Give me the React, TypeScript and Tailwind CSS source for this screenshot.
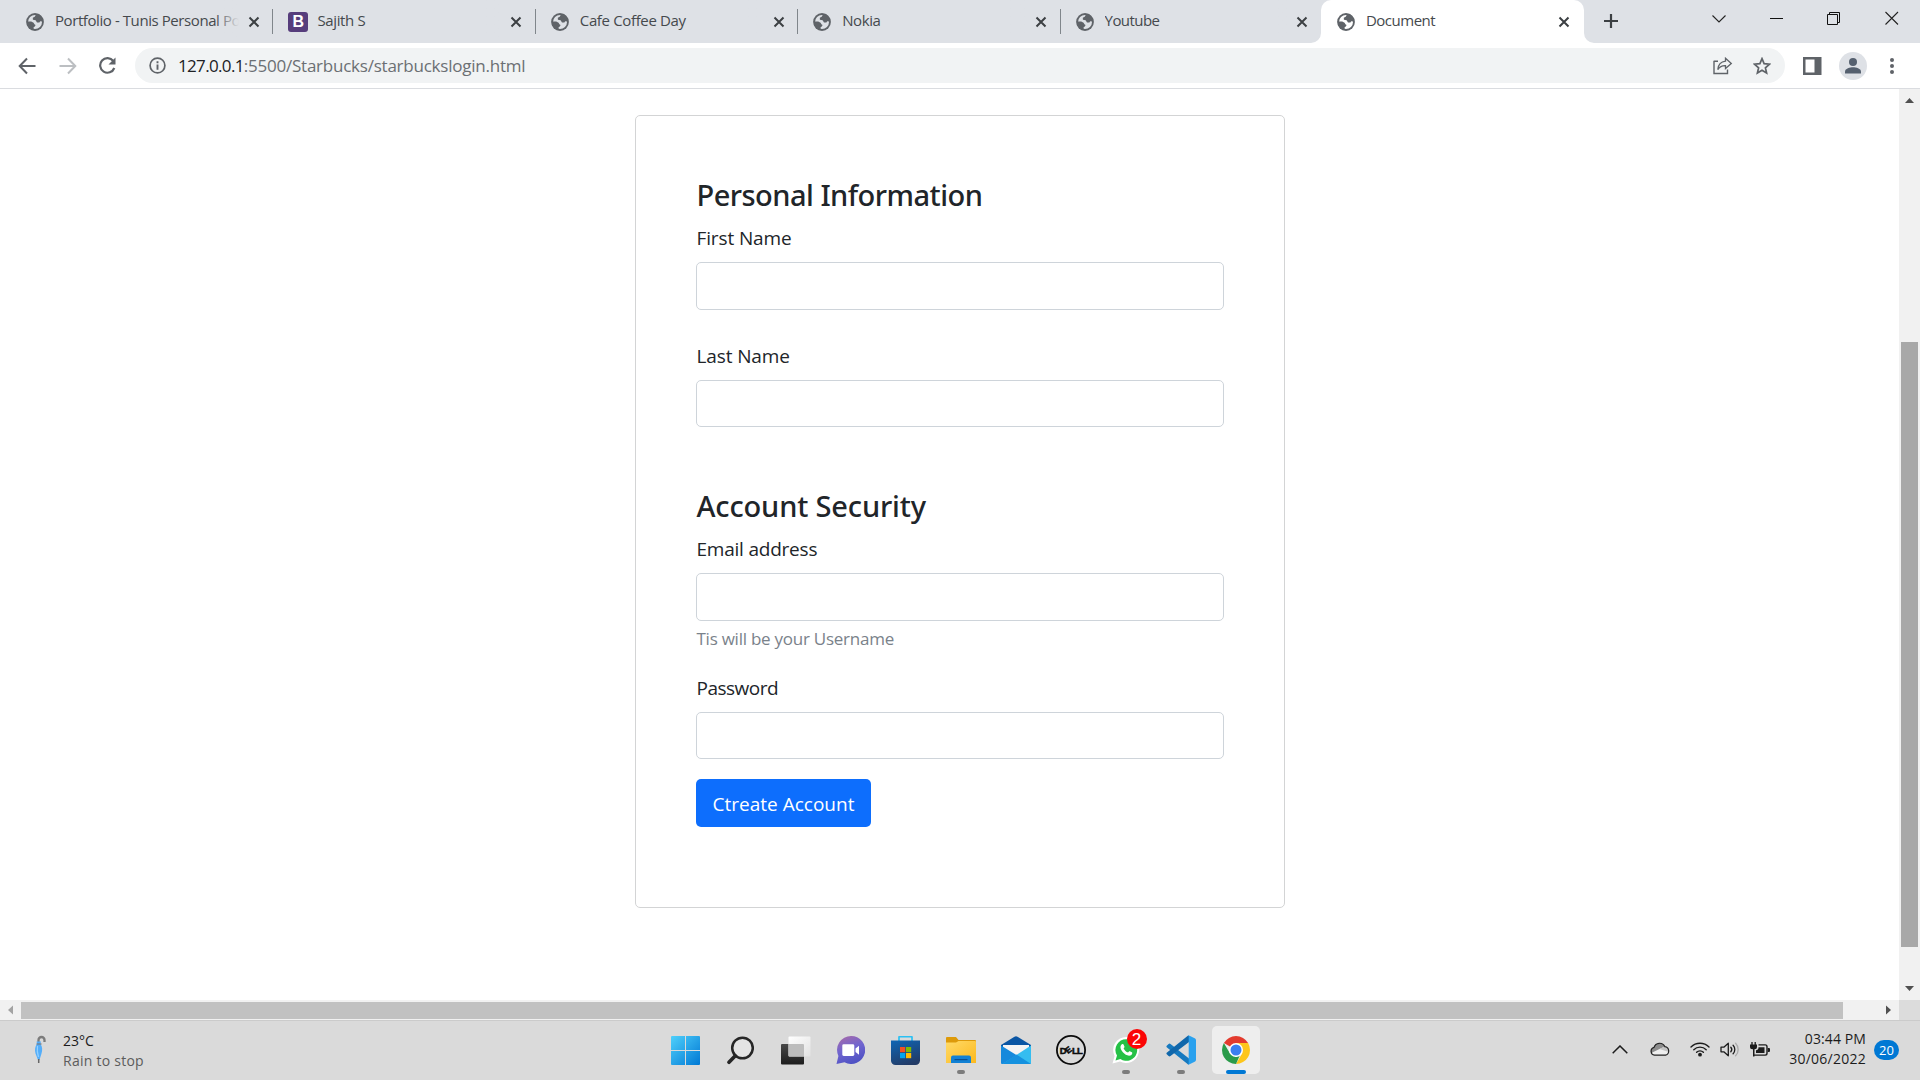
import React from "react";

const sans = "font-['Open_Sans','Noto_Sans',sans-serif]";

function Globe({ light = "#dee1e6" }: { light?: string }) {
  return (
    <svg width="18" height="18" viewBox="0 0 18 18" className="block shrink-0">
      <circle cx="9" cy="9" r="8.9" fill="#5f6368" />
      <circle cx="9" cy="9" r="7" fill={light} />
      <path d="M10.3 1 8.7 3.8 6.8 4.8 6.9 6.8 9.6 7.3 11 9.4 13.4 9.6 14.2 8.2 16.6 8.6 17 5.5 13.5 1.5Z" fill="#5f6368" />
      <path d="M1 8.5 5.2 8.5 7.6 9.8 8.4 11.2 9.6 12 8.8 13.6 7.6 14.3 7.7 17 4 16 1 12Z" fill="#5f6368" />
    </svg>
  );
}

function CloseX() {
  return (
    <svg width="12" height="12" viewBox="0 0 12 12" className="block shrink-0">
      <path d="M1.5 1.5l9 9M10.5 1.5l-9 9" stroke="#3c4043" strokeWidth="2" fill="none" />
    </svg>
  );
}

function Tab({ title, track = "tracking-[-0.35px]", bootstrap = false, last = false }: { title: string; track?: string; bootstrap?: boolean; last?: boolean }) {
  return (
    <div className={`flex h-[43px] w-[262.4px] shrink-0 items-center ${bootstrap ? "pl-[15px]" : "pl-[15px]"}`}>
      {bootstrap ? (
        <span className="flex h-[20px] w-[20px] shrink-0 items-center justify-center rounded-[3px] bg-[#563d7c] font-['Liberation_Sans',sans-serif] text-[16px] font-bold leading-none text-white">B</span>
      ) : (
        <Globe />
      )}
      <span className={`relative ${bootstrap ? "ml-[9px]" : "ml-[11px]"} h-[40px] w-[184px] shrink-0 -translate-y-[2px] overflow-hidden whitespace-nowrap text-[15px] leading-[40px] text-[#45494d] ${track}`}>
        {title}
        <span className="absolute inset-y-0 right-0 w-[24px] bg-gradient-to-r from-transparent to-[#dee1e6]" />
      </span>
      <span className={last ? "ml-[7px]" : "ml-[9px]"}><CloseX /></span>
      {!last && <span className="ml-auto h-[25px] w-px bg-[#80868b]" />}
    </div>
  );
}

function Field({ label, track, below }: { label: string; track: string; below?: React.ReactNode }) {
  return (
    <div>
      <label className={`block h-[40px] pl-[0.5px] pt-px text-[19px] leading-[30px] text-[#212529] ${track}`}>{label}</label>
      <div className="h-[47.5px] rounded-[5px] border border-[#ced4da] bg-white" />
      {below}
    </div>
  );
}

function TabStrip() {
  return (
    <div className="flex h-[43px] bg-[#dee1e6] pl-[11px]">
      <Tab title="Portfolio - Tunis Personal Po" track="tracking-[-0.42px]" />
      <Tab title="Sajith S" bootstrap />
      <Tab title="Cafe Coffee Day" />
      <Tab title="Nokia" track="tracking-[-0.4px]" />
      <Tab title="Youtube" track="tracking-[-0.55px]" last />
      <div className="relative -ml-[2px] flex h-[43px] w-[263px] shrink-0 items-center rounded-t-[10px] bg-white pl-[16px]">
        <svg width="10" height="10" className="absolute -left-[10px] bottom-0"><path d="M10 0V10H0A10 10 0 0 0 10 0Z" fill="#fff" /></svg>
        <svg width="10" height="10" className="absolute -right-[10px] bottom-0"><path d="M0 0V10H10A10 10 0 0 1 0 0Z" fill="#fff" /></svg>
        <Globe light="#fff" />
        <span className="ml-[11px] h-[40px] w-[184px] shrink-0 -translate-y-[2px] text-[15px] leading-[40px] tracking-[-0.5px] text-[#45494d]">Document</span>
        <span className="ml-[8px]"><CloseX /></span>
      </div>
      <svg width="16" height="16" viewBox="0 0 16 16" className="ml-[19px] mt-[13px]"><path d="M8 1v14M1 8h14" stroke="#3c4043" strokeWidth="2.2" /></svg>
      <div className="ml-auto flex pr-[21px] pt-[11px]">
        <svg width="14" height="14" viewBox="0 0 14 14"><path d="M.5 4.500l6.500 6.500 6.500-6.500" stroke="#222" strokeWidth="1.1" fill="none" /></svg>
        <svg width="14" height="14" viewBox="0 0 14 14" className="ml-[44px]"><path d="M0 7.500h13" stroke="#111" strokeWidth="1" /></svg>
        <svg width="14" height="14" viewBox="0 0 14 14" className="ml-[43px]"><path d="M.5 3.500h10v10H.5zM2.500 3.500v-2h10v10h-2" stroke="#111" strokeWidth="1" fill="none" /></svg>
        <svg width="14" height="14" viewBox="0 0 14 14" className="ml-[44px]"><path d="M.5 1l12.500 12.500M13 1L.5 13.500" stroke="#222" strokeWidth="1.1" /></svg>
      </div>
    </div>
  );
}

function Toolbar() {
  return (
    <div className="flex h-[46px] items-center border-b border-[#dadce0] bg-white">
      <svg width="18" height="18" viewBox="0 0 18 18" className="ml-[18px]"><path d="M17.500 9H2M9 1.500L1.700 9 9 16.500" stroke="#5f6368" strokeWidth="2" fill="none" /></svg>
      <svg width="18" height="18" viewBox="0 0 18 18" className="ml-[23px]"><path d="M.5 9H16M9 1.500L16.300 9 9 16.500" stroke="#bcbfc2" strokeWidth="2" fill="none" /></svg>
      <svg width="19" height="18" viewBox="0 0 19 18" className="ml-[21px]"><path d="M15.300 4A7.300 7.300 0 1 0 16.300 11" stroke="#5f6368" strokeWidth="2.200" fill="none" /><path d="M17.500 .4V7.400H10.500Z" fill="#5f6368" /></svg>
      <div className="ml-[18px] flex h-[35px] w-[1650px] items-center rounded-full bg-[#f1f3f4] pl-[14px]">
        <svg width="17" height="17" viewBox="0 0 17 17"><circle cx="8.500" cy="8.500" r="7.400" stroke="#5f6368" strokeWidth="1.700" fill="none" /><path d="M8.500 4.200v2M8.500 7.500v5.200" stroke="#5f6368" strokeWidth="1.900" /></svg>
        <span className="ml-[12px] whitespace-nowrap text-[17px] leading-[35px] tracking-[-0.23px] text-[#6b6f73]"><span className="tracking-[-0.66px] text-[#202124]">127.0.0.1</span>:5500/Starbucks/starbuckslogin.html</span>
        <svg width="20" height="18" viewBox="0 0 20 18" className="ml-auto"><path d="M1 4.200H5M1 3.700V16.500H14.500V12.500" stroke="#5f6368" strokeWidth="1.400" fill="none" /><path d="M12.500 1.200L18.300 6.400 12.500 11.500V8.600C9 8.400 6.700 9.700 4.800 12.600 5.200 8 8 4.700 12.500 4.200Z" stroke="#5f6368" strokeWidth="1.300" fill="none" /></svg>
        <svg width="18" height="18" viewBox="0 0 18 18" className="ml-[20px] mr-[14px]"><path d="M9 1.700l2.100 5 5.400.5-4.100 3.600 1.200 5.300L9 13.300l-4.600 2.800 1.200-5.300L1.500 7.200l5.400-.5z" stroke="#5f6368" strokeWidth="1.700" fill="none" /></svg>
      </div>
      <svg width="19" height="18" viewBox="0 0 19 18" className="ml-[18px]"><path d="M0 0h18.500v18H0zM2.500 2.500v13H11.500v-13z" fillRule="evenodd" fill="#5f6368" /></svg>
      <svg width="28" height="28" viewBox="0 0 28 28" className="ml-[17px]"><circle cx="14" cy="14" r="14" fill="#dee1e6" /><circle cx="14" cy="10" r="4" fill="#55606f" /><path d="M6 21.500v-2c0-2.800 5-4.200 8-4.200s8 1.400 8 4.200v2z" fill="#55606f" /></svg>
      <svg width="6" height="18" viewBox="0 0 6 18" className="ml-[22px]"><g fill="#5f6368"><circle cx="3" cy="3" r="2" /><circle cx="3" cy="9" r="2" /><circle cx="3" cy="15" r="2" /></g></svg>
    </div>
  );
}

function Page() {
  return (
    <div className="flex h-[931px]">
      <div className="flex w-[1899px] flex-col">
        <div className="h-[911px] bg-white pt-[26px]">
          <div className="ml-[635px] h-[793px] w-[650px] rounded-[5px] border border-[#d3d4d5] px-[60px] pt-[60px]">
            <h4 className="h-[46px] whitespace-nowrap pl-[0.5px] pt-px font-['Noto_Sans',sans-serif] text-[29px] font-medium leading-[36px] tracking-[-0.52px] text-[#212529]">Personal Information</h4>
            <Field label="First Name" track="tracking-[-0.12px]" />
            <div className="mt-[30px]"><Field label="Last Name" track="tracking-[-0.12px]" /></div>
            <h4 className="mt-[60px] h-[46px] whitespace-nowrap pl-[0.5px] pt-px font-['Noto_Sans',sans-serif] text-[29px] font-medium leading-[36px] tracking-[-0.15px] text-[#212529]">Account Security</h4>
            <Field
              label="Email address"
              track="tracking-[-0.22px]"
              below={<p className="mt-[5px] h-[26px] pl-[0.5px] text-[17px] leading-[26px] tracking-[-0.25px] text-[#7a828a]">Tis will be your Username</p>}
            />
            <div className="mt-[20px]"><Field label="Password" track="tracking-[-0.5px]" /></div>
            <button className="mt-[20px] block h-[48px] w-[175px] rounded-[5px] bg-[#0d6efd] pt-[2px] text-center text-[19px] leading-[46px] text-white">Ctreate Account</button>
          </div>
        </div>
        <div className="flex h-[20px] items-center bg-[#f1f1f1]">
          <svg width="21" height="20"><path d="M13 5.500v9L8 10z" fill="#a3a3a3" /></svg>
          <div className="h-[17px] w-[1822px] bg-[#c1c1c1]" />
          <svg width="21" height="20" className="ml-[35px]"><path d="M8 5.500v9L13 10z" fill="#505050" /></svg>
        </div>
      </div>
      <div className="flex w-[21px] flex-col">
        <div className="flex h-[911px] flex-col items-center bg-[#f1f1f1]">
          <svg width="21" height="21"><path d="M6 14h9l-4.500-5z" fill="#505050" /></svg>
          <div className="mt-[232px] h-[605px] w-[17px] bg-[#a8a8a8]" />
          <svg width="21" height="21" className="mt-auto"><path d="M6 7h9l-4.500 5z" fill="#505050" /></svg>
        </div>
        <div className="h-[20px] bg-[#dcdcdc]" />
      </div>
    </div>
  );
}

function AppSlot({ children, running = false }: { children: React.ReactNode; running?: boolean }) {
  return (
    <div className="relative flex h-[58px] w-[55px] items-center justify-center">
      {children}
      {running && <span className="absolute bottom-[5px] left-1/2 h-[4px] w-[8px] -translate-x-1/2 rounded-full bg-[#7c7c7c]" />}
    </div>
  );
}

function Taskbar() {
  return (
    <div className="flex h-[60px] border-t border-[#cbcbcb] bg-[#dadada]">
      <div className="flex w-[658px]">
        <svg width="12" height="30" viewBox="0 0 12 30" className="ml-[34px] mt-[14px]">
          <path d="M4.500 8V5a3 3 0 0 1 6 0v2" stroke="#7c7c7c" strokeWidth="2.300" fill="none" />
          <path d="M2.500 6.500h4.500l-.5 2.200C8.500 12 8.600 15 7.500 18.500L5.500 25h-1.500L1.500 18.500C.5 14.500 1 11.500 3 8.700Z" fill="#54aefa" />
          <path d="M3.500 11c-.6 4 0 8 1 11" stroke="#93d0ff" strokeWidth="1.200" fill="none" />
          <path d="M4.700 24v4" stroke="#666" strokeWidth="1.500" />
          <path d="M2.500 9h5" stroke="#707b86" strokeWidth="1.200" />
        </svg>
        <div className="ml-[17px] pt-[10px] text-[14px] leading-[20px]">
          <div className="text-[#1c1c1c]">23°C</div>
          <div className="tracking-[0.25px] text-[#5c5c5c]">Rain to stop</div>
        </div>
      </div>
      <div className="flex">
        <AppSlot>
          <svg width="29" height="29" viewBox="0 0 29 29">
            <defs><linearGradient id="win" x1="0" y1="0" x2="1" y2="1" gradientUnits="objectBoundingBox"><stop offset="0" stopColor="#4fd0fb" /><stop offset="1" stopColor="#0078d4" /></linearGradient></defs>
            <path d="M1 0H14V14H0V1A1 1 0 0 1 1 0ZM15 0H28A1 1 0 0 1 29 1V14H15ZM0 15H14V29H1A1 1 0 0 1 0 28ZM15 15H29V28A1 1 0 0 1 28 29H15Z" fill="url(#win)" />
          </svg>
        </AppSlot>
        <AppSlot>
          <svg width="27" height="29" viewBox="0 0 27 29"><circle cx="15.500" cy="12" r="10.300" fill="#e4e4e4" stroke="#262626" strokeWidth="2.500" /><path d="M8.300 19.700L2 26.300" stroke="#262626" strokeWidth="3.600" strokeLinecap="round" /></svg>
        </AppSlot>
        <AppSlot>
          <svg width="30" height="29" viewBox="0 0 30 29">
            <defs>
              <linearGradient id="tv1" x1="0" y1="0" x2="0" y2="1"><stop offset="0" stopColor="#484848" /><stop offset="1" stopColor="#1d1d1d" /></linearGradient>
              <linearGradient id="tv2" x1="0" y1="0" x2="1" y2="1"><stop offset="0" stopColor="#ffffff" /><stop offset="1" stopColor="#e2e2e2" /></linearGradient>
            </defs>
            <rect x="0" y="8" width="23" height="20.500" rx="1" fill="url(#tv1)" />
            <rect x="7.500" y="0.500" width="22" height="20" rx="1" fill="url(#tv2)" />
            <path d="M7.500 8H22a1 1 0 0 1 1 1V20.500H8.500a1 1 0 0 1-1-1z" fill="#bdbdbd" />
          </svg>
        </AppSlot>
        <AppSlot>
          <svg width="29" height="28" viewBox="0 0 29 28">
            <defs><linearGradient id="chat" x1="0.100" y1="0" x2="0.500" y2="1"><stop offset="0" stopColor="#a86aa8" /><stop offset="0.500" stopColor="#7165cf" /><stop offset="1" stopColor="#4f52c4" /></linearGradient></defs>
            <path d="M15 0A14 14 0 1 1 8.500 26.300L.5 28 2.400 20A14 14 0 0 1 15 0Z" fill="url(#chat)" />
            <rect x="6.300" y="8.300" width="12" height="11.600" rx="1.400" fill="#fff" />
            <path d="M19.500 12.500L23 9.700v9L19.500 16z" fill="#fff" />
          </svg>
        </AppSlot>
        <AppSlot>
          <svg width="29" height="29" viewBox="0 0 29 29">
            <defs><linearGradient id="store" x1="0.200" y1="0" x2="0.600" y2="1"><stop offset="0" stopColor="#0f63b0" /><stop offset="1" stopColor="#233b66" /></linearGradient></defs>
            <path d="M8 6V1.200a.6.6 0 0 1 .6-.6H20.400a.6.6 0 0 1 .6.6V6" stroke="#2bc0f3" strokeWidth="1.700" fill="none" />
            <path d="M0 4.500H29V24.500A4.500 4.500 0 0 1 24.500 29H4.500A4.500 4.500 0 0 1 0 24.500Z" fill="url(#store)" />
            <path d="M9 11h5.200v5.200H9z" fill="#f25022" /><path d="M15 11h5.200v5.200H15z" fill="#7fba00" /><path d="M9 17h5.200v5.200H9z" fill="#00a4ef" /><path d="M15 17h5.200v5.200H15z" fill="#ffb900" />
          </svg>
        </AppSlot>
        <AppSlot running>
          <svg width="30" height="26" viewBox="0 0 30 26">
            <defs><linearGradient id="fold" x1="0" y1="0" x2="1" y2="1"><stop offset="0" stopColor="#ffda68" /><stop offset="1" stopColor="#fcb91d" /></linearGradient></defs>
            <path d="M0 1A1 1 0 0 1 1 0H10L12.500 3H29a1 1 0 0 1 1 1V10H0Z" fill="#dd9a0a" />
            <path d="M0 5.500H10L12.500 4H29a1 1 0 0 1 1 1V26H0Z" fill="url(#fold)" />
            <path d="M5 26V20.500A2 2 0 0 1 7 18.500H23A2 2 0 0 1 25 20.500V26Z" fill="#1281d4" />
            <path d="M8.500 22.600h13" stroke="#0a4f91" strokeWidth="1.200" />
          </svg>
        </AppSlot>
        <AppSlot>
          <svg width="30" height="28" viewBox="0 0 30 28">
            <path d="M0 9L13.500.7a3 3 0 0 1 3 0L30 9V14H0Z" fill="#0a56a4" />
            <path d="M2 9H28V20H2z" fill="#f4f4f4" />
            <path d="M0 9.500L30 28H1A1 1 0 0 1 0 27Z" fill="#1689dc" />
            <path d="M30 9.500V27a1 1 0 0 1-1 1H1.500Z" fill="#35bdf0" />
            <path d="M15.500 18.600L30 28H1.500Z" fill="#1591df" />
          </svg>
        </AppSlot>
        <AppSlot>
          <svg width="30" height="30" viewBox="0 0 30 30">
            <circle cx="15" cy="15" r="14.100" stroke="#0c0c0c" strokeWidth="1.800" fill="none" />
            <g fill="#0c0c0c" stroke="#0c0c0c" strokeWidth="0.500" fontFamily="Liberation Sans" fontWeight="bold" fontSize="9.500">
              <text x="3.700" y="18.500">D</text>
              <text x="15.900" y="18.500">L</text>
              <text x="20.900" y="18.500">L</text>
              <text x="0" y="0" fontSize="8.500" transform="translate(11.900 19) rotate(-38)">E</text>
            </g>
          </svg>
        </AppSlot>
        <AppSlot running>
          <span className="relative flex h-[28px] w-[28px] items-center justify-center">
            <svg width="28" height="28" viewBox="0 0 28 28" className="absolute inset-0">
              <path d="M14.500 1A13 13 0 1 1 8 25.500L.5 27.500 2.600 20A13 13 0 0 1 14.500 1Z" fill="#fff" />
              <path d="M14.500 3.200A10.800 10.800 0 1 1 8.400 23L3.500 24.500 5 19.500A10.800 10.800 0 0 1 14.500 3.200Z" fill="#25c146" />
              <path d="M9.800 8.300c.9-.6 1.600-.3 1.900.5l.8 1.900c.2.600-.5 1.100-.9 1.700 1 2 2.400 3.300 4.500 4.100.6-.6 1-1.500 1.700-1.200l2.100 1c.9.600.1 2.300-.8 2.900-4.600 2.400-11.400-4.700-10.600-8.600.2-.9.600-1.800 1.300-2.300z" fill="#fff" />
            </svg>
            <span className="absolute -right-[7px] -top-[7px] flex h-[20px] w-[20px] items-center justify-center rounded-full bg-[#fb0505] font-['Liberation_Sans',sans-serif] text-[17px] leading-none text-white">2</span>
          </span>
        </AppSlot>
        <AppSlot running>
          <svg width="30" height="30" viewBox="0 0 30 30">
            <path d="M1 10.500L2.600 9a1.500 1.500 0 0 1 1.900 0L23 23.500V29.500a2 2 0 0 1-1.500-.6L1 12.500a1.300 1.300 0 0 1 0-2z" fill="#1679bf" />
            <path d="M1 19.500L2.600 21a1.500 1.500 0 0 0 1.900 0L23 7V.5a2 2 0 0 0-1.500.6L1 17.500a1.300 1.300 0 0 0 0 2z" fill="#1067ab" />
            <path d="M21.500.9c.6-.6 1.200-.5 2-.2L28.700 3.200A2.200 2.200 0 0 1 30 5.200V24.800a2.200 2.200 0 0 1-1.300 2L23.500 29.300c-.8.400-1.500.3-2-.2.900.6 1.200-.2 1.200-1.100V2C22.700 1.100 22.200.5 21.500.9z" fill="#2aa1ee" />
          </svg>
        </AppSlot>
        <AppSlot>
          <span className="relative flex h-[48px] w-[48px] shrink-0 items-center justify-center rounded-[5px] bg-[#eeeeee]">
            <svg width="28" height="28" viewBox="0 0 28 28">
              <path d="M14 14L1.880 7A14 14 0 0 1 26.120 7Z" fill="#e33b2e" />
              <path d="M14 7H26.120A14 14 0 0 1 14 28L20 17.500Z" fill="#fdc61c" />
              <path d="M1.880 7L8 17.500 14 21 18 19 14 28A14 14 0 0 1 1.880 7Z" fill="#2a9b4a" />
              <circle cx="14" cy="14" r="7" fill="#fff" /><circle cx="14" cy="14" r="5.500" fill="#3a7ff0" />
            </svg>
            <span className="absolute bottom-0 left-[14px] h-[4px] w-[20px] rounded-full bg-[#0078d4]" />
          </span>
        </AppSlot>
      </div>
      <div className="ml-auto flex items-center pb-[3px] pr-[21px]">
        <svg width="16" height="9" viewBox="0 0 16 9"><path d="M.7 8.300L8 1l7.300 7.300" stroke="#1c1c1c" strokeWidth="1.500" fill="none" /></svg>
        <svg width="20" height="14" viewBox="0 0 20 14" className="ml-[22px]">
          <path d="M4.500 13.200A4 4 0 0 1 4 5.400 5.800 5.800 0 0 1 14.800 4.600a4.400 4.400 0 0 1 .7 8.600z" fill="#efefef" />
          <path d="M1.200 11A4 4 0 0 1 4 5.400 5.800 5.800 0 0 1 14.800 4.600l-1.500.6L9.500 7Z" fill="#8c8c8c" /><path d="M9.500 7l5-2.400a4.400 4.400 0 0 1 4.300 5.500z" fill="#c4c4c4" />
          <path d="M4.500 13.200A4 4 0 0 1 4 5.400 5.800 5.800 0 0 1 14.800 4.600a4.400 4.400 0 0 1 .7 8.600z" stroke="#222" strokeWidth="1.200" fill="none" />
        </svg>
        <svg width="20" height="16" viewBox="0 0 20 16" className="ml-[20px]"><g stroke="#1c1c1c" strokeWidth="1.400" fill="none" strokeLinecap="round"><path d="M1 6a12.800 12.800 0 0 1 18 0M3.800 8.700a8.800 8.800 0 0 1 12.400 0M6.600 11.300a4.900 4.900 0 0 1 6.800 0" /></g><circle cx="10" cy="13.700" r="1.900" fill="#1c1c1c" /></svg>
        <svg width="20" height="15" viewBox="0 0 20 15" className="ml-[10px]"><g stroke="#1c1c1c" strokeWidth="1.300" fill="none" strokeLinecap="round"><path d="M1 5.200h2.800L8.300 1.200v12.600L3.800 9.800H1z" strokeLinejoin="round" /><path d="M10.800 5.200a3.500 3.500 0 0 1 0 4.600M13.100 3.200a6.300 6.300 0 0 1 0 8.600" /><path d="M15.600 1.200a9 9 0 0 1 0 12.600" stroke="#ababab" /></g></svg>
        <svg width="20" height="15" viewBox="0 0 20 15" className="ml-[10px]"><path d="M2 0v3M5.200 0v3" stroke="#1c1c1c" strokeWidth="1.300" /><path d="M0 2.500h7v2.200a2.500 2.500 0 0 1-2.500 2.500h-2A2.500 2.500 0 0 1 0 4.700zM3 7h1.500v7.500H3z" fill="#1c1c1c" /><path d="M8.500 2.900h6.700a1.800 1.800 0 0 1 1.800 1.800v6.600a1.800 1.800 0 0 1-1.800 1.800H4" stroke="#1c1c1c" strokeWidth="1.400" fill="none" /><path d="M8.500 5.200h6v5.800H6V8.300a3 3 0 0 0 2.500-3.100zM17.700 6H19a1 1 0 0 1 1 1v2a1 1 0 0 1-1 1h-1.300z" fill="#1c1c1c" /></svg>
        <div className="ml-[18px] mr-px w-[78px] text-right text-[14px] leading-[20px] text-[#1c1c1c]">
          <div className="tracking-[0.1px]">03:44 PM</div>
          <div className="tracking-[0.25px]">30/06/2022</div>
        </div>
        <span className="ml-[7px] mt-px flex h-[20px] w-[25px] items-center justify-center rounded-full bg-[#0078d4] text-[13px] leading-[20px] text-white">20</span>
      </div>
    </div>
  );
}

export default function App() {
  return (
    <div className={`h-[1080px] w-[1920px] overflow-hidden bg-white ${sans} font-normal`}>
      <TabStrip />
      <Toolbar />
      <Page />
      <Taskbar />
    </div>
  );
}
